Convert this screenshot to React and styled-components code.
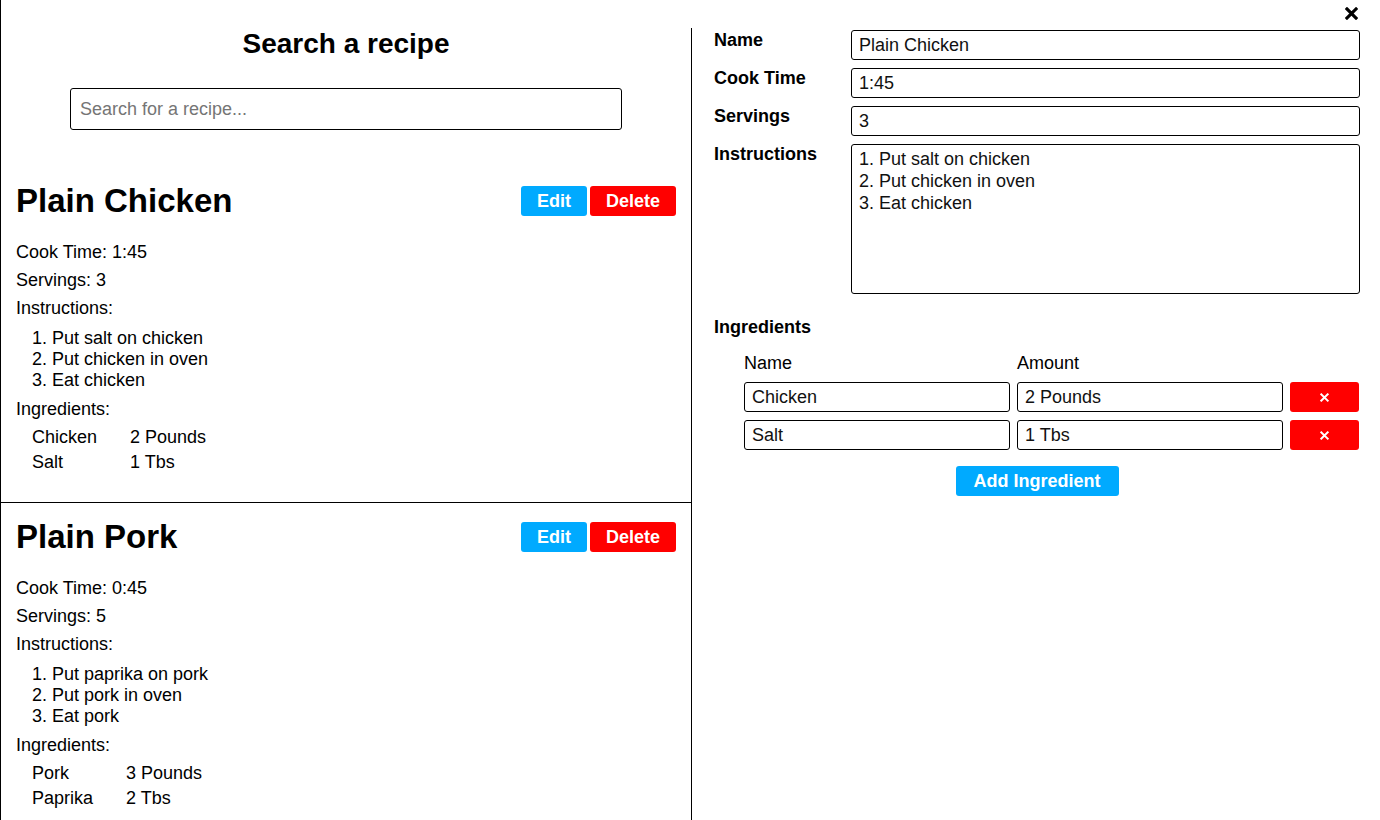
import React from "react";
import styled, { createGlobalStyle } from "styled-components";

const GlobalStyle = createGlobalStyle`
  html, body {
    margin: 0;
    padding: 0;
    background: #fff;
    font-family: "Liberation Sans", Arial, sans-serif;
    color: #000;
  }
  * {
    box-sizing: border-box;
  }
`;

const Page = styled.div`
  display: flex;
  width: 1380px;
  height: 820px;
  overflow: hidden;
`;

const ListColumn = styled.div`
  width: 691px;
  flex-shrink: 0;
  border-left: 1px solid #000;
  display: flex;
  flex-direction: column;
`;

const SearchArea = styled.div`
  display: flex;
  flex-direction: column;
  align-items: center;
  padding: 28px 0 37px;
`;

const SearchTitle = styled.h2`
  font-size: 28px;
  line-height: 32px;
  font-weight: bold;
  margin: 0 0 28px;
`;

const SearchInput = styled.input`
  width: 552px;
  height: 42px;
  border: 1px solid #000;
  border-radius: 3px;
  padding: 0 9px;
  font-family: inherit;
  font-size: 18px;
  color: #000;
  outline: none;

  &::placeholder {
    color: #757575;
  }
`;

const Recipe = styled.div`
  padding: 0 15px 27px;
  border-bottom: 1px solid #000;
  flex-shrink: 0;
`;

const RecipeHeader = styled.div`
  height: 68px;
  display: flex;
  align-items: center;
  justify-content: space-between;
  margin-bottom: 3px;
`;

const RecipeName = styled.h1`
  font-size: 33px;
  line-height: 36px;
  font-weight: bold;
  margin: 0;
`;

const ButtonGroup = styled.div`
  display: flex;
  gap: 3px;
`;

const ActionButton = styled.button`
  height: 30px;
  padding: 0 ${(p) => p.$pad || 16}px;
  border: none;
  border-radius: 3px;
  background: ${(p) => (p.$danger ? "#ff0000" : "#00aaff")};
  color: #fff;
  font-family: inherit;
  font-size: 18px;
  font-weight: bold;
  cursor: pointer;
  display: flex;
  align-items: center;
  justify-content: center;
`;

const Detail = styled.div`
  font-size: 18px;
  line-height: 28px;
`;

const Steps = styled.ol`
  margin: 6px 0 4px;
  padding-left: 36px;
  font-size: 18px;
  line-height: 21px;
`;

const IngredientTable = styled.div`
  display: grid;
  grid-template-columns: max-content max-content;
  column-gap: 33px;
  margin-top: 2px;
  padding-left: 16px;
  font-size: 18px;
  line-height: 25px;
`;

const EditColumn = styled.div`
  flex: 1;
  display: flex;
  flex-direction: column;
`;

const CloseRow = styled.div`
  height: 28px;
  display: flex;
  justify-content: flex-end;
  align-items: flex-start;
  padding: 7px 22px 0 0;
`;

const CloseButton = styled.button`
  width: 13px;
  height: 13px;
  padding: 0;
  border: none;
  background: none;
  cursor: pointer;
  display: flex;
`;

const EditPanel = styled.div`
  flex: 1;
  border-left: 1px solid #000;
  padding: 2px 20px 0 22px;
`;

const FieldRow = styled.div`
  display: grid;
  grid-template-columns: 137px 1fr;
  align-items: start;
  margin-bottom: 8px;
`;

const FieldLabel = styled.label`
  font-size: 18px;
  line-height: 20px;
  font-weight: bold;
`;

const TextField = styled.input`
  width: 100%;
  height: 30px;
  border: 1px solid #000;
  border-radius: 3px;
  padding: 0 7px;
  font-family: inherit;
  font-size: 18px;
  color: #111;
  outline: none;
`;

const TextArea = styled.textarea`
  width: 100%;
  height: 150px;
  border: 1px solid #000;
  border-radius: 3px;
  padding: 3px 7px;
  font-family: inherit;
  font-size: 18px;
  line-height: 22px;
  color: #111;
  resize: none;
  outline: none;
  display: block;
`;

const SectionLabel = styled.div`
  font-size: 18px;
  line-height: 20px;
  font-weight: bold;
  margin-top: 23px;
`;

const IngredientGrid = styled.div`
  display: grid;
  grid-template-columns: 266px 266px 69px;
  column-gap: 7px;
  row-gap: 8px;
  padding-left: 30px;
  margin-top: 16px;
`;

const ColumnHead = styled.div`
  font-size: 18px;
  line-height: 20px;
  margin-bottom: 1px;
`;

const RemoveButton = styled.button`
  height: 30px;
  border: none;
  border-radius: 3px;
  background: #ff0000;
  display: flex;
  align-items: center;
  justify-content: center;
  cursor: pointer;
`;

const AddRow = styled.div`
  display: flex;
  justify-content: center;
  margin-top: 16px;
`;

const recipes = [
  {
    name: "Plain Chicken",
    cookTime: "1:45",
    servings: 3,
    steps: ["Put salt on chicken", "Put chicken in oven", "Eat chicken"],
    ingredients: [
      ["Chicken", "2 Pounds"],
      ["Salt", "1 Tbs"],
    ],
  },
  {
    name: "Plain Pork",
    cookTime: "0:45",
    servings: 5,
    steps: ["Put paprika on pork", "Put pork in oven", "Eat pork"],
    ingredients: [
      ["Pork", "3 Pounds"],
      ["Paprika", "2 Tbs"],
    ],
  },
];

const Cross = ({ size, weight }) => (
  <svg width={size} height={size} viewBox="0 0 10 10">
    <path
      d="M1.5 1.5 L8.5 8.5 M8.5 1.5 L1.5 8.5"
      stroke="currentColor"
      strokeWidth={weight}
      strokeLinecap="square"
      fill="none"
    />
  </svg>
);

const RecipeCard = ({ recipe }) => (
  <Recipe>
    <RecipeHeader>
      <RecipeName>{recipe.name}</RecipeName>
      <ButtonGroup>
        <ActionButton>Edit</ActionButton>
        <ActionButton $danger>Delete</ActionButton>
      </ButtonGroup>
    </RecipeHeader>
    <Detail>Cook Time: {recipe.cookTime}</Detail>
    <Detail>Servings: {recipe.servings}</Detail>
    <Detail>Instructions:</Detail>
    <Steps>
      {recipe.steps.map((step) => (
        <li key={step}>{step}</li>
      ))}
    </Steps>
    <Detail>Ingredients:</Detail>
    <IngredientTable>
      {recipe.ingredients.map(([name, amount]) => (
        <React.Fragment key={name}>
          <span>{name}</span>
          <span>{amount}</span>
        </React.Fragment>
      ))}
    </IngredientTable>
  </Recipe>
);

const App = () => {
  const current = recipes[0];

  return (
    <>
      <GlobalStyle />
      <Page>
        <ListColumn>
          <SearchArea>
            <SearchTitle>Search a recipe</SearchTitle>
            <SearchInput placeholder="Search for a recipe..." />
          </SearchArea>
          {recipes.map((r) => (
            <RecipeCard key={r.name} recipe={r} />
          ))}
        </ListColumn>

        <EditColumn>
          <CloseRow>
            <CloseButton style={{ color: "#000" }}>
              <Cross size={13} weight={2.4} />
            </CloseButton>
          </CloseRow>
          <EditPanel>
            <FieldRow>
              <FieldLabel>Name</FieldLabel>
              <TextField defaultValue={current.name} />
            </FieldRow>
            <FieldRow>
              <FieldLabel>Cook Time</FieldLabel>
              <TextField defaultValue={current.cookTime} />
            </FieldRow>
            <FieldRow>
              <FieldLabel>Servings</FieldLabel>
              <TextField defaultValue={current.servings} />
            </FieldRow>
            <FieldRow>
              <FieldLabel>Instructions</FieldLabel>
              <TextArea
                defaultValue={current.steps
                  .map((s, i) => `${i + 1}. ${s}`)
                  .join("\n")}
              />
            </FieldRow>

            <SectionLabel>Ingredients</SectionLabel>
            <IngredientGrid>
              <ColumnHead>Name</ColumnHead>
              <ColumnHead>Amount</ColumnHead>
              <span />
              {current.ingredients.map(([name, amount]) => (
                <React.Fragment key={name}>
                  <TextField defaultValue={name} />
                  <TextField defaultValue={amount} />
                  <RemoveButton style={{ color: "#fff" }}>
                    <Cross size={9} weight={2.2} />
                  </RemoveButton>
                </React.Fragment>
              ))}
            </IngredientGrid>
            <AddRow>
              <ActionButton $pad={18}>Add Ingredient</ActionButton>
            </AddRow>
          </EditPanel>
        </EditColumn>
      </Page>
    </>
  );
};

export default App;
